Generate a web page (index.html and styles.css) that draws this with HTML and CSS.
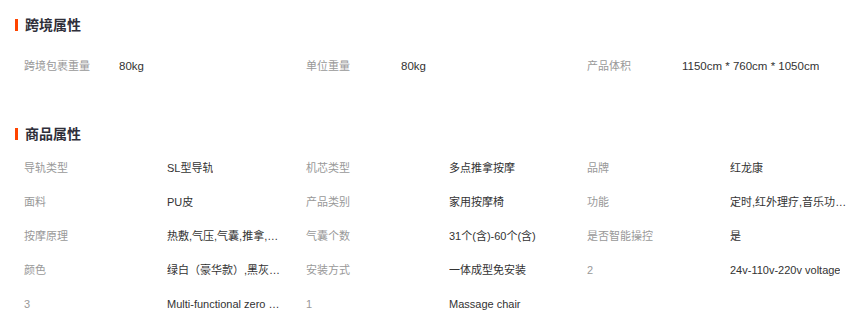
FILE: index.html
```html
<!DOCTYPE html>
<html lang="zh-CN">
<head>
<meta charset="utf-8">
<title>商品属性</title>
<link rel="stylesheet" href="styles.css">
</head>
<body>
<div class="page">
  <section class="block block-cross">
    <h2 class="title">跨境属性</h2>
    <ul class="attrs attrs-cross">
      <li class="attr"><span class="label">跨境包裹重量</span><span class="value">80kg</span></li>
      <li class="attr"><span class="label">单位重量</span><span class="value">80kg</span></li>
      <li class="attr"><span class="label">产品体积</span><span class="value">1150cm * 760cm * 1050cm</span></li>
    </ul>
  </section>
  <section class="block block-goods">
    <h2 class="title">商品属性</h2>
    <ul class="attrs attrs-goods">
      <li class="attr"><span class="label">导轨类型</span><span class="value">SL型导轨</span></li>
      <li class="attr"><span class="label">机芯类型</span><span class="value">多点推拿按摩</span></li>
      <li class="attr"><span class="label">品牌</span><span class="value">红龙康</span></li>
      <li class="attr"><span class="label">面料</span><span class="value">PU皮</span></li>
      <li class="attr"><span class="label">产品类别</span><span class="value">家用按摩椅</span></li>
      <li class="attr"><span class="label">功能</span><span class="value">定时,红外理疗,音乐功能,全身按摩</span></li>
      <li class="attr"><span class="label">按摩原理</span><span class="value">热敷,气压,气囊,推拿,揉捏</span></li>
      <li class="attr"><span class="label">气囊个数</span><span class="value">31个(含)-60个(含)</span></li>
      <li class="attr"><span class="label">是否智能操控</span><span class="value">是</span></li>
      <li class="attr"><span class="label">颜色</span><span class="value">绿白（豪华款）,黑灰（豪华款）</span></li>
      <li class="attr"><span class="label">安装方式</span><span class="value">一体成型免安装</span></li>
      <li class="attr"><span class="label">2</span><span class="value">24v-110v-220v voltage</span></li>
      <li class="attr"><span class="label">3</span><span class="value">Multi-functional zero gravity</span></li>
      <li class="attr"><span class="label">1</span><span class="value">Massage chair</span></li>
    </ul>
  </section>
</div>
</body>
</html>
```

FILE: styles.css
```css
* { box-sizing: border-box; }
html, body { margin: 0; padding: 0; background: #fff; }
body {
  font-family: "Liberation Sans", "Noto Sans CJK SC", sans-serif;
  font-size: 11px;
  color: #333;
  overflow: hidden;
}
.page { width: 870px; padding-top: 18px; }
.title {
  margin: 0 0 0 15px;
  display: flex;
  align-items: center;
  height: 14px;
  font-size: 14px;
  font-weight: bold;
  color: #2f2f3a;
  line-height: 14px;
}
.title::before {
  content: "";
  display: block;
  width: 3px;
  height: 12px;
  background: #ff4400;
  margin-right: 7px;
}
.attrs {
  list-style: none;
  margin: 0;
  padding: 0 0 0 24px;
  display: grid;
  grid-template-columns: 282px 281px 281px;
}
.attrs-cross { margin-top: 17px; }
.block-goods { margin-top: 44px; }
.attrs-goods { margin-top: 10px; }
.attr {
  display: flex;
  align-items: center;
  height: 34px;
  line-height: 34px;
  white-space: nowrap;
}
.label { color: #999; flex: none; }
.attrs-cross .label { width: 95px; }
.attrs-goods .label { width: 143px; }
.value {
  color: #333;
  overflow: hidden;
  text-overflow: ellipsis;
  white-space: nowrap;
}
.attrs-cross .value { font-size: 11.5px; }
.attrs-goods .value { max-width: 117px; }
```
